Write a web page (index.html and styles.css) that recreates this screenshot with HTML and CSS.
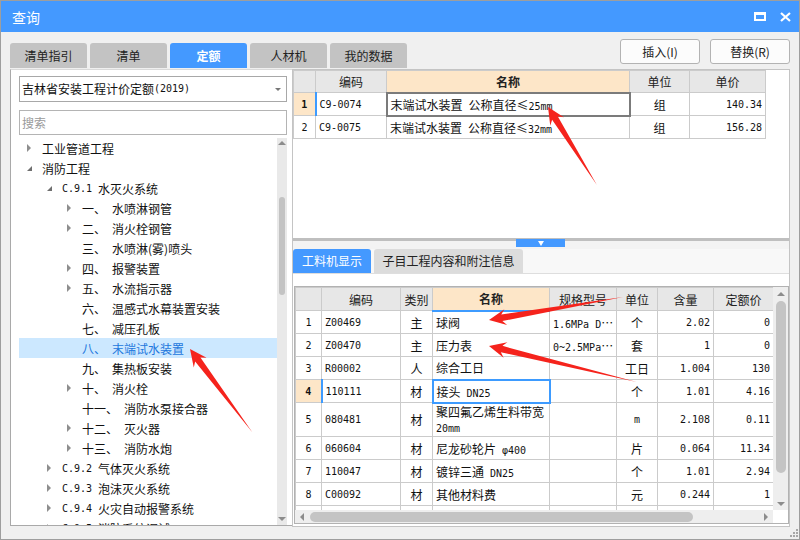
FILE: index.html
```html
<!DOCTYPE html>
<html lang="zh-CN">
<head>
<meta charset="utf-8">
<title>查询</title>
<link rel="stylesheet" href="styles.css">
</head>
<body>
<div class="window">
  <div class="titlebar">
    <span class="title">查询</span>
    <div class="win-btns">
      <svg class="ico" width="12" height="9" viewBox="0 0 12 9"><rect x="1" y="1" width="10" height="7" fill="none" stroke="#fff" stroke-width="2"/><rect x="1" y="0" width="10" height="3" fill="#fff"/></svg>
      <svg class="ico" width="11" height="10" viewBox="0 0 11 10"><path d="M1 1L10 9M10 1L1 9" stroke="#fff" stroke-width="2.2"/></svg>
    </div>
  </div>

  <div class="toolbar">
    <div class="tabs">
      <div class="tab">清单指引</div>
      <div class="tab">清单</div>
      <div class="tab active">定额</div>
      <div class="tab">人材机</div>
      <div class="tab">我的数据</div>
    </div>
    <div class="actions">
      <button class="btn">插入(I)</button>
      <button class="btn">替换(R)</button>
    </div>
  </div>

  <div class="main">
    <div class="lpane">
      <div class="select">吉林省安装工程计价定额<span class="m">(2019)</span><i class="caret"></i></div>
      <div class="search">搜索</div>
      <div class="tree">
        <div class="tree-list">
          <div class="node l0"><i class="tg c"></i><span>工业管道工程</span></div>
          <div class="node l0"><i class="tg e"></i><span>消防工程</span></div>
          <div class="node l1"><i class="tg e"></i><span class="m code">C.9.1</span><span>水灭火系统</span></div>
          <div class="node l2"><i class="tg c"></i><span class="pre">一、</span><span>水喷淋钢管</span></div>
          <div class="node l2"><i class="tg c"></i><span class="pre">二、</span><span>消火栓钢管</span></div>
          <div class="node l2"><i class="tg"></i><span class="pre">三、</span><span>水喷淋(雾)喷头</span></div>
          <div class="node l2"><i class="tg c"></i><span class="pre">四、</span><span>报警装置</span></div>
          <div class="node l2"><i class="tg c"></i><span class="pre">五、</span><span>水流指示器</span></div>
          <div class="node l2"><i class="tg"></i><span class="pre">六、</span><span>温感式水幕装置安装</span></div>
          <div class="node l2"><i class="tg"></i><span class="pre">七、</span><span>减压孔板</span></div>
          <div class="node l2 sel"><i class="tg"></i><span class="pre">八、</span><span>末端试水装置</span></div>
          <div class="node l2"><i class="tg"></i><span class="pre">九、</span><span>集热板安装</span></div>
          <div class="node l2"><i class="tg c"></i><span class="pre">十、</span><span>消火栓</span></div>
          <div class="node l2"><i class="tg"></i><span class="pre">十一、</span><span>消防水泵接合器</span></div>
          <div class="node l2"><i class="tg c"></i><span class="pre">十二、</span><span>灭火器</span></div>
          <div class="node l2"><i class="tg c"></i><span class="pre">十三、</span><span>消防水炮</span></div>
          <div class="node l1"><i class="tg c"></i><span class="m code">C.9.2</span><span>气体灭火系统</span></div>
          <div class="node l1"><i class="tg c"></i><span class="m code">C.9.3</span><span>泡沫灭火系统</span></div>
          <div class="node l1"><i class="tg c"></i><span class="m code">C.9.4</span><span>火灾自动报警系统</span></div>
          <div class="node l1"><i class="tg c"></i><span class="m code">C.9.5</span><span>消防系统调试</span></div>
        </div>
        <div class="tvs">
          <i class="tri a-up"></i>
          <i class="tthumb"></i>
          <i class="tri a-down"></i>
        </div>
      </div>
    </div>

    <div class="rpane">
      <div class="top-area">
        <table class="grid gtop">
          <colgroup>
            <col class="t-rn"><col class="t-code"><col class="t-name"><col class="t-unit"><col class="t-price">
          </colgroup>
          <thead>
            <tr><th></th><th>编码</th><th class="hl">名称</th><th>单位</th><th>单价</th></tr>
          </thead>
          <tbody>
            <tr><td class="rn cur">1</td><td class="code mark">C9-0074</td><td class="fg">末端试水装置&ensp;公称直径≤<span class="m">25mm</span></td><td class="ctr">组</td><td class="num">140.34</td></tr>
            <tr><td class="rn">2</td><td class="code">C9-0075</td><td>末端试水装置&ensp;公称直径≤<span class="m">32mm</span></td><td class="ctr">组</td><td class="num">156.28</td></tr>
          </tbody>
        </table>
      </div>
      <div class="splitter"><span class="handle"><i class="tri a-wdown"></i></span></div>
      <div class="band"></div>
      <div class="subtabs">
        <div class="stab active">工料机显示</div>
        <div class="stab">子目工程内容和附注信息</div>
      </div>
      <div class="grid-area">
        <div class="gridframe">
          <div class="gwrap">
            <table class="grid gbot">
              <colgroup>
                <col class="b-rn"><col class="b-code"><col class="b-type"><col class="b-name"><col class="b-spec"><col class="b-unit"><col class="b-qty"><col class="b-price">
              </colgroup>
              <thead>
                <tr><th></th><th>编码</th><th>类别</th><th class="hl">名称</th><th>规格型号</th><th>单位</th><th>含量</th><th>定额价</th></tr>
              </thead>
              <tbody>
                <tr><td class="rn">1</td><td class="code">Z00469</td><td class="ctr">主</td><td>球阀</td><td class="code">1.6MPa D<span class="ell">⋯</span></td><td class="ctr">个</td><td class="num">2.02</td><td class="num">0</td></tr>
                <tr><td class="rn">2</td><td class="code">Z00470</td><td class="ctr">主</td><td>压力表</td><td class="code">0~2.5MPa<span class="ell">⋯</span></td><td class="ctr">套</td><td class="num">1</td><td class="num">0</td></tr>
                <tr><td class="rn">3</td><td class="code">R00002</td><td class="ctr">人</td><td>综合工日</td><td></td><td class="ctr">工日</td><td class="num">1.004</td><td class="num">130</td></tr>
                <tr><td class="rn cur">4</td><td class="code mark">110111</td><td class="ctr">材</td><td class="fb">接头<span class="m"> DN25</span></td><td></td><td class="ctr">个</td><td class="num">1.01</td><td class="num">4.16</td></tr>
                <tr class="tall"><td class="rn">5</td><td class="code">080481</td><td class="ctr">材</td><td class="wrap">聚四氟乙烯生料带宽<br><span class="m">20mm</span></td><td></td><td class="ctr m">m</td><td class="num">2.108</td><td class="num">0.11</td></tr>
                <tr><td class="rn">6</td><td class="code">060604</td><td class="ctr">材</td><td>尼龙砂轮片<span class="m"> φ400</span></td><td></td><td class="ctr">片</td><td class="num">0.064</td><td class="num">11.34</td></tr>
                <tr><td class="rn">7</td><td class="code">110047</td><td class="ctr">材</td><td>镀锌三通<span class="m"> DN25</span></td><td></td><td class="ctr">个</td><td class="num">1.01</td><td class="num">2.94</td></tr>
                <tr><td class="rn">8</td><td class="code">C00092</td><td class="ctr">材</td><td>其他材料费</td><td></td><td class="ctr">元</td><td class="num">0.244</td><td class="num">1</td></tr>
                <tr><td class="rn">9</td><td class="code">ZHFY</td><td class="ctr">材</td><td>其他</td><td></td><td class="ctr">元</td><td class="num">1</td><td class="num">1</td></tr>
              </tbody>
            </table>
          </div>
          <div class="vs">
            <i class="tri a-up"></i>
            <i class="vthumb"></i>
            <i class="tri a-down"></i>
          </div>
          <div class="hs">
            <i class="tri a-left"></i>
            <i class="hthumb"></i>
            <i class="tri a-right"></i>
          </div>
          <div class="corner"></div>
        </div>
      </div>
    </div>
  </div>

  <div class="footer">
    <svg class="grip" width="10" height="10" viewBox="0 0 10 10">
      <rect x="8" y="0" width="2" height="2" fill="#a8a8a8"/>
      <rect x="5" y="3" width="2" height="2" fill="#a8a8a8"/>
      <rect x="8" y="3" width="2" height="2" fill="#a8a8a8"/>
      <rect x="2" y="6" width="2" height="2" fill="#a8a8a8"/>
      <rect x="5" y="6" width="2" height="2" fill="#a8a8a8"/>
      <rect x="8" y="6" width="2" height="2" fill="#a8a8a8"/>
    </svg>
  </div>

  <svg class="arrows" width="800" height="540" viewBox="0 0 800 540">
    <g fill="#f5231c">
      <polygon transform="translate(190 349) rotate(-126.8)" points="0,0 -17,-8 -13,-3.3 -104,0 -13,3.3 -17,8"/>
      <polygon transform="translate(548 107) rotate(-122.1)" points="0,0 -17,-8 -13,-3.3 -92,0 -13,3.3 -17,8"/>
      <polygon transform="translate(489 320) rotate(170.3)" points="0,0 -17,-8 -13,-3.3 -136,0 -13,3.3 -17,8"/>
      <polygon transform="translate(489 346) rotate(-166.3)" points="0,0 -17,-8 -13,-3.3 -152,0 -13,3.3 -17,8"/>
    </g>
  </svg>
</div>
</body>
</html>
```

FILE: styles.css
```css
* { box-sizing: border-box; }
html, body { margin: 0; padding: 0; }
body {
  width: 800px;
  height: 540px;
  overflow: hidden;
  font-family: "Noto Sans CJK SC", "Noto Sans", sans-serif;
  font-size: 12px;
  color: #111;
}
i { display: block; font-style: normal; }

.window {
  position: relative;
  width: 800px;
  height: 540px;
  border: 1px solid #9e9e9e;
  background: #f0f0f0;
  display: flex;
  flex-direction: column;
  overflow: hidden;
}

/* title bar */
.titlebar {
  height: 31px;
  flex: none;
  background: #4499ff;
  color: #fff;
  display: flex;
  align-items: center;
  padding: 0 8px 0 11px;
}
.title { font-size: 14px; }
.win-btns { margin-left: auto; display: flex; align-items: center; gap: 14px; }
.ico { display: block; }

/* toolbar with tabs */
.toolbar {
  height: 36px;
  flex: none;
  display: flex;
  align-items: flex-end;
  padding: 0 9px 0 9px;
}
.tabs { display: flex; gap: 3px; }
.tab {
  width: 77px;
  height: 25px;
  line-height: 25px;
  text-align: center;
  background: #c3c3c3;
  border-radius: 3px 3px 0 0;
  color: #222;
  font-size: 12px;
}
.tab.active { background: #4499ff; color: #fff; font-weight: bold; }
.actions { margin-left: auto; align-self: flex-start; margin-top: 7px; display: flex; gap: 10px; }
.btn {
  width: 80px;
  height: 25px;
  padding: 0;
  background: #fcfcfc;
  border: 1px solid #b3b3b3;
  border-radius: 3px;
  font-family: "Noto Sans CJK SC", "Noto Sans", sans-serif;
  font-size: 12px;
  color: #222;
}

/* main */
.main {
  height: 459px;
  flex: none;
  display: flex;
  align-items: flex-start;
  padding-left: 9px;
}
.lpane {
  width: 282px;
  height: 457px;
  flex: none;
  margin-top: 1px;
  background: #fff;
  border-left: 1px solid #a9a9a9;
  border-bottom: 1px solid #a9a9a9;
  border-top: 1px solid #dadada;
  padding: 6px 5px 0 8px;
  display: flex;
  flex-direction: column;
}
.select {
  height: 26px;
  flex: none;
  border: 1px solid #a8a8a8;
  line-height: 24px;
  padding-left: 2px;
  font-size: 12px;
  display: flex;
  align-items: center;
}
.caret {
  margin-left: auto;
  margin-right: 5px;
  width: 0; height: 0;
  border-style: solid;
  border-width: 3px 3px 0 3px;
  border-color: #777 transparent transparent transparent;
}
.search {
  margin-top: 8px;
  height: 25px;
  flex: none;
  border: 1px solid #b4b4b4;
  line-height: 23px;
  padding-left: 2px;
  color: #9a9a9a;
  font-size: 12px;
}
.tree {
  margin-top: 3px;
  height: 387px;
  flex: none;
  display: flex;
  overflow: hidden;
}
.tree-list { flex: 1; min-width: 0; overflow: hidden; }
.node {
  height: 20px;
  display: flex;
  align-items: center;
  white-space: nowrap;
  color: #111;
  font-size: 12px;
}
.node.l0 { padding-left: 5px; }
.node.l1 { padding-left: 25px; }
.node.l2 { padding-left: 45px; }
.node.sel { background: #cce8ff; color: #2277dd; }
.tg { width: 18px; height: 20px; flex: none; position: relative; }
.tg.c::before {
  content: "";
  position: absolute;
  left: 3px; top: 6px;
  border-style: solid;
  border-width: 4px 0 4px 4px;
  border-color: transparent transparent transparent #8e8e8e;
}
.tg.e::before {
  content: "";
  position: absolute;
  left: 3px; top: 8px;
  border-style: solid;
  border-width: 0 0 5px 5px;
  border-color: transparent transparent #6f6f6f transparent;
}
.m { font-family: "DejaVu Sans Mono", "Liberation Mono", monospace; font-size: 10px; }
.pre { margin-right: 6px; }
.node .code { margin-right: 6px; }

.tvs {
  width: 10px;
  flex: none;
  background: #e9e9e9;
  display: flex;
  flex-direction: column;
  align-items: center;
}
.tri { width: 0; height: 0; border-style: solid; flex: none; }
.a-up { border-width: 0 4px 4px 4px; border-color: transparent transparent #8c8c8c transparent; }
.a-down { border-width: 4px 4px 0 4px; border-color: #8c8c8c transparent transparent transparent; }
.a-left { border-width: 4px 4px 4px 0; border-color: transparent #8c8c8c transparent transparent; }
.a-right { border-width: 4px 0 4px 4px; border-color: transparent transparent transparent #8c8c8c; }
.tvs .a-up { margin-top: 3px; }
.tvs .a-down { margin-top: auto; margin-bottom: 4px; }
.tthumb { width: 6px; height: 98px; margin-top: 52px; background: #c3c3c3; border-radius: 3px; flex: none; }

/* right */
.rpane {
  width: 498px;
  height: 458px;
  flex: none;
  margin-top: 1px;
  border: 1px solid #c4c4c4;
  background: #fff;
  display: flex;
  flex-direction: column;
  overflow: hidden;
}
.top-area { height: 168px; flex: none; overflow: hidden; }
.splitter { height: 3px; flex: none; background: #bfbfbf; position: relative; }
.handle {
  position: absolute;
  left: 223px;
  top: 1px;
  width: 49px;
  height: 8px;
  background: #4499ff;
  display: flex;
  justify-content: center;
  align-items: center;
}
.a-wdown { border-width: 5px 3px 0 3px; border-color: #fff transparent transparent transparent; }
.band { height: 8px; flex: none; background: #f3f3f3; }
.subtabs {
  height: 25px;
  flex: none;
  display: flex;
  align-items: flex-end;
  background: #f8f8f8;
  border-bottom: 1px solid #dedede;
}
.stab {
  height: 24px;
  line-height: 24px;
  text-align: center;
  border-radius: 3px 3px 0 0;
  font-size: 12px;
  background: #dcdcdc;
  color: #222;
  width: 149px;
  margin-left: 3px;
}
.stab.active { width: 78px; margin-left: 0; background: #4499ff; color: #fff; }
.grid-area { flex: none; height: 252px; padding: 12px 0 2px 1px; }
.gridframe {
  display: grid;
  grid-template-columns: 478px 15px;
  grid-template-rows: 223px 13px;
  border: 1px solid #b2b2b2;
  width: 495px;
  height: 238px;
}
.gwrap { overflow: hidden; min-width: 0; min-height: 0; }
.vs {
  background: #eeeeee;
  display: flex;
  flex-direction: column;
  align-items: center;
  min-height: 0;
}
.vs .a-up { margin-top: 5px; }
.vthumb { width: 10px; height: 172px; margin-top: 5px; background: #c4c4c4; border-radius: 5px; flex: none; }
.vs .a-down { margin-top: auto; margin-bottom: 4px; }
.hs {
  background: #eeeeee;
  display: flex;
  align-items: center;
  min-width: 0;
}
.hs .a-left { margin-left: 5px; }
.hthumb { height: 10px; width: 383px; margin-left: 6px; background: #c4c4c4; border-radius: 5px; flex: none; }
.hs .a-right { margin-left: auto; margin-right: 5px; }
.corner { background: #fff; }

/* grids */
.grid {
  border-collapse: collapse;
  table-layout: fixed;
  font-size: 12px;
  color: #111;
}
.gtop { width: 472px; }
.gbot { width: 478px; }
.t-rn { width: 22px; }
.t-code { width: 71px; }
.t-name { width: 243px; }
.t-unit { width: 60px; }
.t-price { width: 76px; }
.b-rn { width: 26px; }
.b-code { width: 79px; }
.b-type { width: 32px; }
.b-name { width: 117px; }
.b-spec { width: 67px; }
.b-unit { width: 41px; }
.b-qty { width: 56px; }
.b-price { width: 60px; }
.grid th, .grid td {
  border: 1px solid #cbcbcb;
  padding: 0 3px;
  white-space: nowrap;
  overflow: hidden;
  text-align: left;
  vertical-align: middle;
}
.grid th {
  background: #e7e7e7;
  font-weight: normal;
  text-align: center;
  color: #222;
}
.grid th.hl { background: #fde6c8; font-weight: bold; }
.gbot th.hl { border-bottom: 2px solid #3d9bff; }
.gtop thead tr { height: 22px; }
.gtop tbody tr { height: 23px; }
.gbot tr { height: 23px; }
.gbot tr.tall { height: 34px; }
.grid td.rn { text-align: center; font-family: "DejaVu Sans Mono", monospace; font-size: 10px; padding: 0; }
.grid td.code { font-family: "DejaVu Sans Mono", monospace; font-size: 10px; }
.grid td.ctr { text-align: center; }
.grid td.num { text-align: right; font-family: "DejaVu Sans Mono", monospace; font-size: 10px; }
.grid td.cur { background: #fde6c8; font-weight: bold; }
.grid td.mark { border-left: 2px solid #3d9bff; }
.grid td.fg { border: 2px solid #7b7b7b; }
.grid td.fb { border: 2px solid #3d9bff; }
.grid td.wrap { white-space: normal; line-height: 15px; }
.ell { font-family: "Noto Sans CJK SC", sans-serif; font-size: 12px; }

/* footer */
.footer {
  height: 12px;
  flex: none;
  display: flex;
  justify-content: flex-end;
  align-items: flex-end;
  padding-right: 1px;
}
.grip { display: block; }

/* annotation arrows over content */
.arrows {
  position: absolute;
  left: -1px;
  top: -1px;
  pointer-events: none;
}
```
